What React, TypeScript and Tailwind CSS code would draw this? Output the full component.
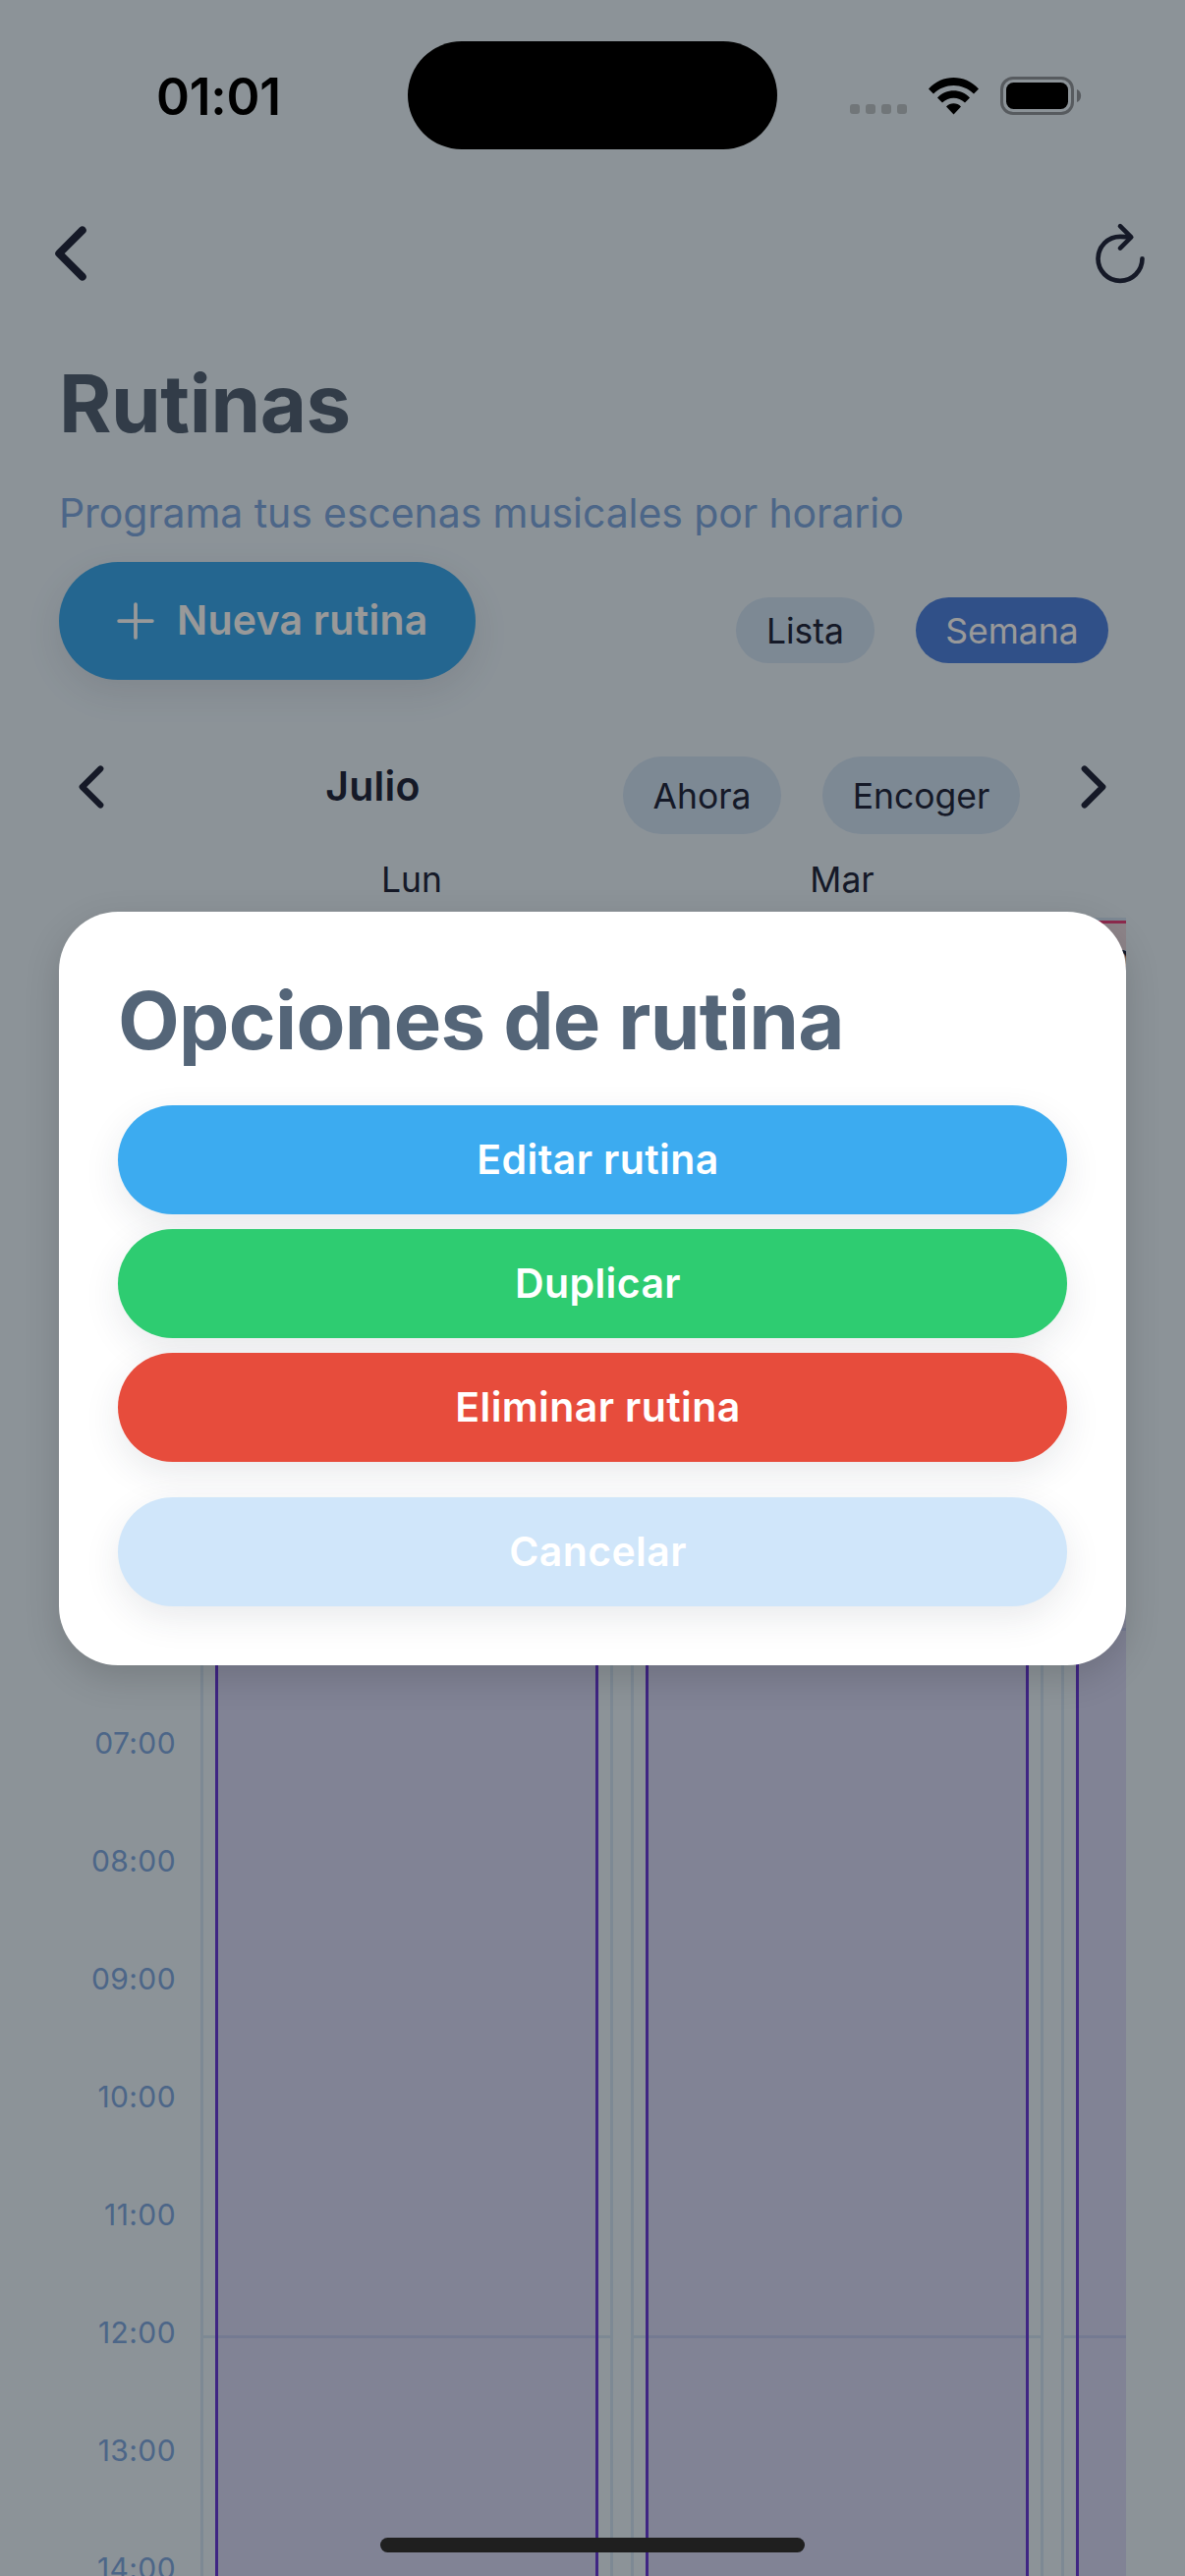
import React from "react";

const HOURS = Array.from({ length: 15 }, (_, h) => `${String(h).padStart(2, "0")}:00`);

function Chevron({ size, flip = false }: { size: number; flip?: boolean }) {
  return (
    <svg width={size} height={size} viewBox="0 0 512 512" fill="none" stroke="currentColor" strokeWidth="48" strokeLinecap="round" strokeLinejoin="round" className="shrink-0">
      <path d={flip ? "M184 112l144 144-144 144" : "M328 112L184 256l144 144"} />
    </svg>
  );
}

function StatusBar() {
  return (
    <div className="absolute inset-x-0 top-0 z-30 flex h-[180px] text-black">
      <div className="mt-[67px] ml-[159px] h-[62px] w-[256px] text-[51.5px] leading-[62px] font-semibold tracking-[-0.2px]">01:01</div>
      <div className="mt-[42px] h-[110px] w-[376px] rounded-[55px] bg-black" />
      <div className="mt-[106px] ml-[74px] flex h-[10px] gap-[6px]">
        {[0, 1, 2, 3].map((i) => (
          <div key={i} className="h-[10px] w-[10px] rounded-[3px] bg-[#717679]" />
        ))}
      </div>
      <svg width="51" height="38" viewBox="0 0 51 38" className="mt-[79px] ml-[22px] shrink-0">
        <path d="M0 11.5C14-3.8 37-3.8 51 11.5L46 16.5C34.5 5 16.5 5 5 16.5Z" />
        <path d="M9 20.5C18 10.8 33 10.8 42 20.5L37 25.5C30.5 19 20.5 19 14 25.5Z" />
        <path d="M18 29.5C22 25.2 29 25.2 33 29.5L25.5 37.5Z" />
      </svg>
      <svg width="83" height="40" viewBox="0 0 83 40" className="mt-[78px] ml-[22px] shrink-0">
        <rect x="1.5" y="1.5" width="72" height="36" rx="11.5" fill="none" stroke="#575b5f" strokeWidth="3" />
        <rect x="6" y="6" width="63" height="27" rx="7.5" />
        <path d="M78 13c5.5 2 5.5 11 0 13z" fill="#575b5f" />
      </svg>
    </div>
  );
}

function Column({ children }: { children?: React.ReactNode }) {
  return (
    <div className="relative h-[2880px] w-[420px] shrink-0 border-[3px] border-[#d0e4f7]">
      {HOURS.map((h, i) => (
        <div key={h} className={i % 6 === 0 && i > 0 ? "h-[120px] border-t-[3px] border-[#d0e4f7]" : "h-[120px]"} />
      ))}
      {children ?? (
        <div className="absolute inset-y-0 right-[12px] left-[12px] border-x-[3px] border-[#693edb] bg-[#693edb]/14" />
      )}
    </div>
  );
}

function Chip({ label, className }: { label: string; className: string }) {
  return (
    <div className={`flex shrink-0 items-center justify-center rounded-full pt-[2px] text-[35.5px] ${className}`}>
      <span>{label}</span>
    </div>
  );
}

function Action({ label, className }: { label: string; className: string }) {
  return (
    <button className={`h-[111px] w-full shrink-0 rounded-full pl-[11px] text-[41px] font-semibold tracking-[0.4px] text-white shadow-[0_12px_36px_rgba(40,50,70,0.10)] ${className}`}>
      {label}
    </button>
  );
}

export default function App() {
  return (
    <div className="relative h-[2622px] w-[1206px] overflow-hidden bg-[#e9f5fe] font-['Inter',sans-serif]">
      <div className="flex flex-col pt-[180px] text-[#242b41]">
        <div className="flex h-[156px] items-center justify-between px-[30px]">
          <Chevron size={84} />
          <svg width="72" height="72" viewBox="0 0 512 512" fill="none" stroke="currentColor" strokeWidth="33" strokeLinecap="round">
            <path d="M320 146s24.36-12-64-12a160 160 0 10160 160" strokeMiterlimit="10" />
            <path d="M256 58l80 80-80 80" strokeLinejoin="round" />
          </svg>
        </div>
        <h1 className="mt-[24px] ml-[60px] h-[101px] text-[81.5px] leading-[101px] font-bold tracking-[-0.45px] text-[#546578]">Rutinas</h1>
        <p className="mt-[36px] ml-[60px] h-[51px] text-[41px] leading-[51px] tracking-[-0.1px] text-[#7faae3]">Programa tus escenas musicales por horario</p>
        <div className="mt-[24px] flex h-[120px] pr-[78px] pl-[60px]">
          <div className="flex h-[120px] w-[424px] items-center rounded-full bg-[#3cabf0] pl-[48px] text-white shadow-[0_12px_36px_rgba(40,50,70,0.10)]">
            <svg width="60" height="60" viewBox="0 0 512 512" stroke="currentColor" strokeWidth="32" strokeLinecap="round">
              <path d="M256 112v288M400 256H112" />
            </svg>
            <span className="ml-[12px] text-[41px] font-semibold tracking-[0.25px] whitespace-nowrap">Nueva rutina</span>
          </div>
          <div className="mt-[36px] ml-auto flex gap-[42px]">
            <Chip label="Lista" className="h-[67px] w-[141px] bg-[#d0e4f7]" />
            <Chip label="Semana" className="h-[67px] w-[196px] bg-[#5085e3] text-white" />
          </div>
        </div>
        <div className="mt-[76px] flex h-[81px] items-start px-[60px]">
          <Chevron size={66} />
          <div className="h-[64px] w-[508px] pr-[1px] text-center text-[41px] leading-[64px] font-semibold tracking-[0.2px]">Julio</div>
          <Chip label="Ahora" className="mt-[2px] h-[79px] w-[161px] bg-[#d0e4f7]" />
          <Chip label="Encoger" className="mt-[2px] ml-[42px] h-[79px] w-[201px] bg-[#d0e4f7]" />
          <div className="ml-auto">
            <Chevron size={66} flip />
          </div>
        </div>
        <div className="mt-[24px] flex h-[45px] pl-[200px] text-center text-[35.5px] leading-[45px]">
          <div className="w-[438px]">Lun</div>
          <div className="w-[438px]">Mar</div>
        </div>
        <div className="mt-[16px] mr-[60px] flex h-[1688px] overflow-hidden">
          <div className="w-[204px] shrink-0 pt-[828px] pr-[25px] text-right text-[30px] tracking-[0.4px] text-[#7faae3]">
            {HOURS.slice(7).map((h) => (
              <div key={h} className="h-[120px] leading-[24px]">{h}</div>
            ))}
          </div>
          <div className="flex gap-[18px]">
            <Column />
            <Column />
            <Column>
              <div className="absolute inset-x-[12px] top-0 h-[360px] border-[3px] border-[#ec4680] bg-[#ebdce4] pt-[20px] pl-[14px] text-[30px] leading-[36px] font-semibold">00:00</div>
              <div className="absolute inset-x-[12px] top-[360px] bottom-0 border-x-[3px] border-[#693edb] bg-[#693edb]/14" />
            </Column>
          </div>
        </div>
      </div>
      <div className="absolute inset-0 z-10 flex flex-col items-center bg-black/40 pt-[928px]">
        <div className="flex h-[767px] w-[1086px] flex-col rounded-[60px] bg-white px-[60px] shadow-[0_12px_36px_rgba(0,0,0,0.15)]">
          <h2 className="mt-[60px] h-[101px] text-[81.5px] leading-[101px] font-bold tracking-[-0.7px] whitespace-nowrap text-[#546578]">Opciones de rutina</h2>
          <div className="mt-[36px] flex flex-col gap-[15px]">
            <Action label="Editar rutina" className="bg-[#3cabf0]" />
            <Action label="Duplicar" className="bg-[#2ecc71]" />
            <Action label="Eliminar rutina" className="bg-[#e74c3c]" />
            <Action label="Cancelar" className="mt-[21px] bg-[#d0e6fa]" />
          </div>
        </div>
      </div>
      <StatusBar />
      <div className="absolute bottom-[24px] left-[387px] z-30 h-[15px] w-[432px] rounded-full bg-[#1f1f1f]" />
    </div>
  );
}
